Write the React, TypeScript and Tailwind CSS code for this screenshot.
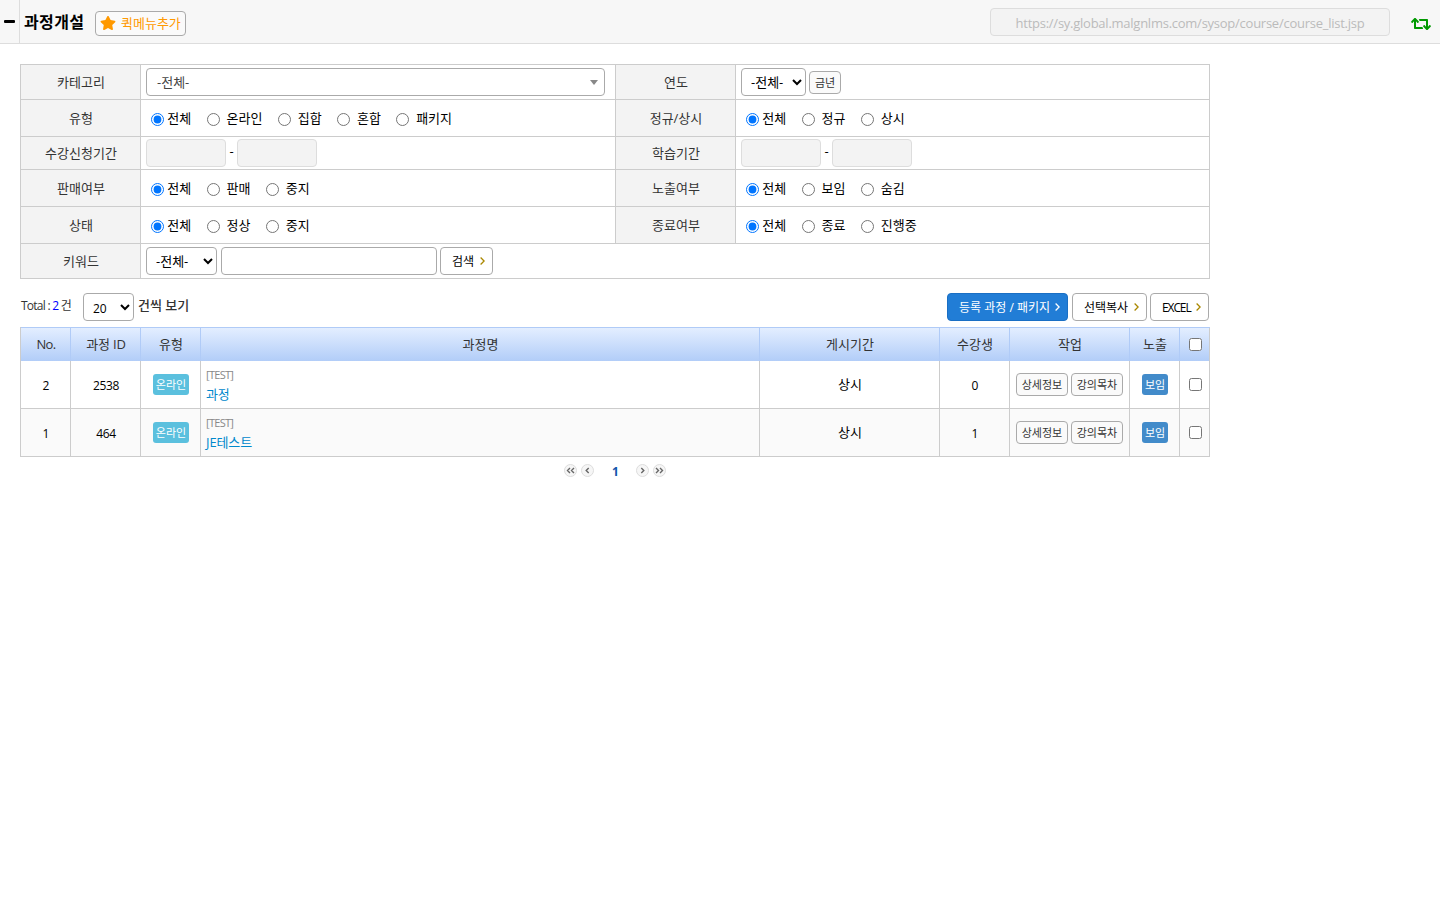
import type { ReactNode } from "react";
import { FaRetweet, FaStar } from "react-icons/fa";

function Chevron({ className }: { className: string }) {
  return (
    <svg width="5" height="8" viewBox="0 0 5 8" fill="none" stroke="currentColor" strokeWidth="1.3" className={className}>
      <path d="M0.6 0.5 4.1 4 0.6 7.5" />
    </svg>
  );
}

function Label({ children }: { children: ReactNode }) {
  return (
    <div className="flex items-center justify-center border-r border-b border-[#ccc] bg-[#f3f3f3] pb-px pl-px text-[#333]">
      {children}
    </div>
  );
}

function Cell({ children, className = "" }: { children: ReactNode; className?: string }) {
  return <div className={`flex items-center border-r border-b border-[#ccc] pl-[5px] ${className}`}>{children}</div>;
}

function Radios({ name, options }: { name: string; options: string[] }) {
  return (
    <Cell className="gap-[15.5px] pt-px pl-[10px]">
      {options.map((option, i) => (
        <label key={option} className={`flex items-center ${i === 0 ? "gap-[3.3px]" : "gap-[6.8px]"}`}>
          <input type="radio" name={name} defaultChecked={i === 0} className="mt-[2px] size-[13px]" />
          <span className="pb-px">{option}</span>
        </label>
      ))}
    </Cell>
  );
}

function DateRange() {
  return (
    <Cell>
      <input readOnly className="h-7 w-20 rounded border border-[#ddd] bg-[#f3f3f3]" />
      <span className="w-[11px] pb-1 text-center">-</span>
      <input readOnly className="h-7 w-20 rounded border border-[#ddd] bg-[#f3f3f3]" />
    </Cell>
  );
}

function Select({ value, className }: { value: string; className: string }) {
  return (
    <select className={`h-7 rounded border border-[#aaa] bg-white pl-[5px] text-black ${className}`}>
      <option>{value}</option>
    </select>
  );
}

function SmallButton({ children, className }: { children: ReactNode; className: string }) {
  return (
    <button className={`h-[23px] rounded border border-[#aaa] bg-[#fafafa] pt-px text-[11px] whitespace-nowrap text-[#333] ${className}`}>
      {children}
    </button>
  );
}

function ActionButton({ children, className }: { children: ReactNode; className: string }) {
  return (
    <button className={`flex h-7 items-center justify-between rounded border pr-[7px] pl-[11px] text-[12px] whitespace-nowrap [&>span]:pt-[2px] ${className}`}>
      {children}
    </button>
  );
}

function HeadCell({ children }: { children: ReactNode }) {
  return (
    <div className="flex items-center justify-center border-r border-[#b0cbf7] pb-px pl-px text-[#333] last:border-[#ccc]">
      {children}
    </div>
  );
}

function BodyCell({ children }: { children: ReactNode }) {
  return <div className="flex items-center justify-center border-r border-b border-[#ccc]">{children}</div>;
}

function PageButton({ double, flip }: { double?: boolean; flip?: boolean }) {
  return (
    <button className="flex size-[13px] items-center justify-center rounded-full border border-[#ddd] bg-[#f6f6f6]">
      <svg width="9" height="7" viewBox="0 0 9 7" fill="none" stroke="#666" strokeWidth="1.4" className={flip ? "-scale-x-100" : ""}>
        <path d={double ? "M4 1 1.5 3.5 4 6M8 1 5.5 3.5 8 6" : "M5.7 1 3.2 3.5 5.7 6"} />
      </svg>
    </button>
  );
}

const columns = "grid-cols-[50px_70px_60px_559px_180px_70px_120px_50px_30px]";

const rows = [
  { no: "2", id: "2538", name: "과정", students: "0", tone: "bg-white" },
  { no: "1", id: "464", name: "JE테스트", students: "1", tone: "bg-[#fafafa]" },
];

export default function App() {
  return (
    <div className="h-[900px] w-[1440px] overflow-hidden bg-white font-['Open_Sans','Noto_Sans_CJK_KR',sans-serif] text-[13px] leading-5 text-black">
      <header className="flex h-11 items-center border-b border-[#ddd] bg-[#f7f7f7]">
        <div className="flex h-full w-5 items-center justify-center border-r border-[#ddd]">
          <div className="mb-px h-[3px] w-[11px] rounded-[1px] bg-black" />
        </div>
        <h1 className="ml-1 w-[71px] text-[16px] font-bold tracking-[0.4px] whitespace-nowrap">과정개설</h1>
        <button className="mt-[3px] flex h-[25px] w-[91px] items-center rounded border border-[#aaa] bg-[#fafafa] pl-1 text-[13px] whitespace-nowrap text-[#f90]">
          <FaStar size={16} />
          <span className="ml-[5px]">퀵메뉴추가</span>
        </button>
        <div className="ml-auto flex h-7 w-[400px] items-center justify-center rounded border border-[#ddd] bg-[#f3f3f3] pt-[2px] text-[13px] text-[#bbb]">
          <span className="tracking-[-0.25px]">https://sy.global.malgnlms.com/sysop/course/course_list.jsp</span>
        </div>
        <FaRetweet size={20} className="mt-1 mr-[9px] ml-[21px] text-[#090]" />
      </header>

      <main className="ml-5 w-[1190px] pt-5">
        <section className="grid grid-cols-[120px_475px_120px_474px] grid-rows-[35px_37px_33px_37px_37px_35px] border-t border-l border-[#ccc]">
          <Label>카테고리</Label>
          <Cell>
            <div className="flex h-7 w-[459px] items-center justify-between rounded border border-[#aaa] pr-[6px] pl-[10px] text-[#444]">
              <span>-전체-</span>
              <svg width="8" height="5" viewBox="0 0 8 5" fill="#888">
                <path d="M0 0h8L4 5z" />
              </svg>
            </div>
          </Cell>
          <Label>연도</Label>
          <Cell>
            <Select value="-전체-" className="w-[65px]" />
            <SmallButton className="ml-[3px] w-8">금년</SmallButton>
          </Cell>

          <Label>유형</Label>
          <Radios name="type" options={["전체", "온라인", "집합", "혼합", "패키지"]} />
          <Label>정규/상시</Label>
          <Radios name="regular" options={["전체", "정규", "상시"]} />

          <Label>수강신청기간</Label>
          <DateRange />
          <Label>학습기간</Label>
          <DateRange />

          <Label>판매여부</Label>
          <Radios name="sale" options={["전체", "판매", "중지"]} />
          <Label>노출여부</Label>
          <Radios name="display" options={["전체", "보임", "숨김"]} />

          <Label>상태</Label>
          <Radios name="status" options={["전체", "정상", "중지"]} />
          <Label>종료여부</Label>
          <Radios name="close" options={["전체", "종료", "진행중"]} />

          <Label>키워드</Label>
          <Cell className="col-span-3">
            <Select value="-전체-" className="w-[71px]" />
            <input className="ml-1 h-7 w-[216px] rounded border border-[#aaa]" />
            <ActionButton className="ml-[3px] w-[53px] border-[#aaa] bg-white">
              <span>검색</span>
              <Chevron className="text-[#a80]" />
            </ActionButton>
          </Cell>
        </section>

        <section className="mt-[14px] flex h-7 items-center pr-px">
          <p className="w-[62px] pb-[2px] pl-px text-[12px] tracking-[-0.75px] whitespace-nowrap text-[#333]">
            Total : <span className="text-[#00f]">2</span> 건
          </p>
          <Select value="20" className="ml-px w-[51px] pt-[2px] text-[12px]" />
          <span className="ml-1 pb-[5px] font-medium text-[#333]">건씩 보기</span>
          <div className="ml-auto flex">
            <ActionButton className="w-[121px] border-[#1a6fc4] bg-[#217dd6] text-white">
              <span>등록 과정 / 패키지</span>
              <Chevron className="text-white" />
            </ActionButton>
            <ActionButton className="ml-1 w-[75px] border-[#aaa] bg-white">
              <span>선택복사</span>
              <Chevron className="text-[#a80]" />
            </ActionButton>
            <ActionButton className="ml-[3px] w-[59px] border-[#aaa] bg-white">
              <span className="tracking-[-1.1px]">EXCEL</span>
              <Chevron className="text-[#a80]" />
            </ActionButton>
          </div>
        </section>

        <section className="mt-[6px] border-l border-[#ccc]">
          <div className={`grid h-[34px] border-t border-[#b0cbf7] bg-linear-to-b from-[#e3eeff] to-[#b2cdf8] ${columns}`}>
            <HeadCell><span className="tracking-[-0.6px]">No.</span></HeadCell>
            <HeadCell><span className="tracking-[-0.2px]">과정 ID</span></HeadCell>
            <HeadCell>유형</HeadCell>
            <HeadCell>과정명</HeadCell>
            <HeadCell>게시기간</HeadCell>
            <HeadCell>수강생</HeadCell>
            <HeadCell>작업</HeadCell>
            <HeadCell>노출</HeadCell>
            <HeadCell><input type="checkbox" className="mt-px ml-px size-[13px]" /></HeadCell>
          </div>
          {rows.map((row) => (
            <div key={row.id} className={`grid h-12 ${columns} ${row.tone}`}>
              <BodyCell><span className="pt-[2px] pl-px text-[12px]">{row.no}</span></BodyCell>
              <BodyCell><span className="pt-[2px] pl-px text-[12px] tracking-[-0.4px]">{row.id}</span></BodyCell>
              <BodyCell>
                <span className="flex h-[21px] w-9 items-center justify-center rounded-[3px] bg-[#5bc0de] pt-px pl-px text-[11px] text-white">온라인</span>
              </BodyCell>
              <div className="flex flex-col border-r border-b border-[#ccc] pt-1 pl-[5px]">
                <span className="text-[11px] tracking-[-0.7px] text-[#888]">[TEST]</span>
                <a className="-mt-px tracking-[-0.1px] text-[#08c]">{row.name}</a>
              </div>
              <BodyCell><span className="pb-px pl-px">상시</span></BodyCell>
              <BodyCell><span className="pt-[2px] pl-px text-[12px]">{row.students}</span></BodyCell>
              <BodyCell>
                <SmallButton className="w-[52px]">상세정보</SmallButton>
                <SmallButton className="ml-[3px] w-[52px]">강의목차</SmallButton>
              </BodyCell>
              <BodyCell>
                <span className="flex h-[21px] w-[26px] items-center justify-center rounded-[3px] bg-[#428bca] pt-px pl-px text-[11px] text-white">보임</span>
              </BodyCell>
              <BodyCell><input type="checkbox" className="ml-px size-[13px]" /></BodyCell>
            </div>
          ))}
        </section>

        <nav className="mt-[7px] flex h-[13px] items-center justify-center gap-1">
          <PageButton double />
          <PageButton />
          <span className="w-[34px] pt-[2px] pl-px text-center text-[12px] font-bold text-[#15a]">1</span>
          <PageButton flip />
          <PageButton double flip />
        </nav>
      </main>
    </div>
  );
}
